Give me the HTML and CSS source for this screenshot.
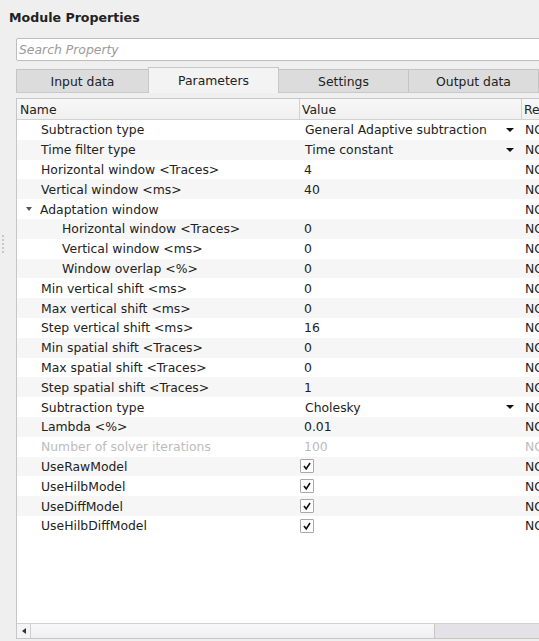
FILE: index.html
```html
<!DOCTYPE html>
<html lang="en">
<head>
  <meta charset="UTF-8">
  <title>Module Properties</title>
  <link rel="stylesheet" href="styles.css">
</head>
<body>
  <div class="grip">
    <i></i><i></i><i></i><i></i><i></i>
  </div>
  <main class="panel">
    <h1 class="title">Module Properties</h1>
    <div class="search"><span class="placeholder">Search Property</span></div>

    <div class="tabs">
      <div class="tab">Input data</div>
      <div class="tab active">Parameters</div>
      <div class="tab">Settings</div>
      <div class="tab">Output data</div>
    </div>

    <div class="tree">
      <div class="hdr">
        <div class="h-cell">Name</div>
        <div class="h-cell">Value</div>
        <div class="h-cell">Re</div>
      </div>

      <div class="rows">
        <div class="row"><div class="c-name">Subtraction type</div><div class="c-val combo">General Adaptive subtraction<span class="drop"></span></div><div class="c-re">NO</div></div>
        <div class="row"><div class="c-name">Time filter type</div><div class="c-val combo">Time constant<span class="drop"></span></div><div class="c-re">NO</div></div>
        <div class="row"><div class="c-name">Horizontal window &lt;Traces&gt;</div><div class="c-val">4</div><div class="c-re">NO</div></div>
        <div class="row"><div class="c-name">Vertical window &lt;ms&gt;</div><div class="c-val">40</div><div class="c-re">NO</div></div>
        <div class="row"><div class="c-name group"><span class="expander"></span>Adaptation window</div><div class="c-val"></div><div class="c-re">NO</div></div>
        <div class="row"><div class="c-name child">Horizontal window &lt;Traces&gt;</div><div class="c-val">0</div><div class="c-re">NO</div></div>
        <div class="row"><div class="c-name child">Vertical window &lt;ms&gt;</div><div class="c-val">0</div><div class="c-re">NO</div></div>
        <div class="row"><div class="c-name child">Window overlap &lt;%&gt;</div><div class="c-val">0</div><div class="c-re">NO</div></div>
        <div class="row"><div class="c-name">Min vertical shift &lt;ms&gt;</div><div class="c-val">0</div><div class="c-re">NO</div></div>
        <div class="row"><div class="c-name">Max vertical shift &lt;ms&gt;</div><div class="c-val">0</div><div class="c-re">NO</div></div>
        <div class="row"><div class="c-name">Step vertical shift &lt;ms&gt;</div><div class="c-val">16</div><div class="c-re">NO</div></div>
        <div class="row"><div class="c-name">Min spatial shift &lt;Traces&gt;</div><div class="c-val">0</div><div class="c-re">NO</div></div>
        <div class="row"><div class="c-name">Max spatial shift &lt;Traces&gt;</div><div class="c-val">0</div><div class="c-re">NO</div></div>
        <div class="row"><div class="c-name">Step spatial shift &lt;Traces&gt;</div><div class="c-val">1</div><div class="c-re">NO</div></div>
        <div class="row"><div class="c-name">Subtraction type</div><div class="c-val combo">Cholesky<span class="drop"></span></div><div class="c-re">NO</div></div>
        <div class="row"><div class="c-name">Lambda &lt;%&gt;</div><div class="c-val">0.01</div><div class="c-re">NO</div></div>
        <div class="row disabled"><div class="c-name">Number of solver iterations</div><div class="c-val">100</div><div class="c-re">NO</div></div>
        <div class="row"><div class="c-name">UseRawModel</div><div class="c-val"><span class="check"><svg viewBox="0 0 13 13"><path d="M3.2 6.6 L5.6 9.6 L9.8 3.2"/></svg></span></div><div class="c-re">NO</div></div>
        <div class="row"><div class="c-name">UseHilbModel</div><div class="c-val"><span class="check"><svg viewBox="0 0 13 13"><path d="M3.2 6.6 L5.6 9.6 L9.8 3.2"/></svg></span></div><div class="c-re">NO</div></div>
        <div class="row"><div class="c-name">UseDiffModel</div><div class="c-val"><span class="check"><svg viewBox="0 0 13 13"><path d="M3.2 6.6 L5.6 9.6 L9.8 3.2"/></svg></span></div><div class="c-re">NO</div></div>
        <div class="row"><div class="c-name">UseHilbDiffModel</div><div class="c-val"><span class="check"><svg viewBox="0 0 13 13"><path d="M3.2 6.6 L5.6 9.6 L9.8 3.2"/></svg></span></div><div class="c-re">NO</div></div>
      </div>

      <div class="hscroll">
        <div class="arrow-left"><span></span></div>
        <div class="slider"></div>
        <div class="track"></div>
      </div>
    </div>
  </main>
</body>
</html>
```

FILE: styles.css
```css
:root{
  --bg:#efefef;
  --line:#c6c6c6;
  --fg:#222;
  --muted:#bcbcbc;
  --alt:#f6f6f6;
}
*{box-sizing:border-box;margin:0;padding:0;}
html,body{height:100%;}
body{
  font-family:"DejaVu Sans",Verdana,sans-serif;
  font-size:12.4px;
  color:var(--fg);
  background:var(--bg);
  display:flex;
  overflow:hidden;
}

/* splitter grip on the left edge */
.grip{flex:0 0 6px;display:flex;flex-direction:column;align-items:center;gap:2px;padding-top:235px;}
.grip i{display:block;width:2px;height:2px;background:#c8c8c8;}

.panel{flex:0 0 580px;display:flex;flex-direction:column;}
.title{font-size:12.6px;font-weight:bold;line-height:15px;padding:10px 0 0 3px;height:25px;}

.search{margin:13px 0 0 10px;height:23px;background:#fff;border:1px solid #bdbdbd;border-radius:2px;display:flex;align-items:center;padding-left:2px;}
.placeholder{font-style:italic;color:#9a9a9a;}

/* ------- TABS ------- */
.tabs{display:flex;align-items:flex-end;margin:6px 0 0 10px;height:26px;}
.tab{flex:0 0 131px;height:24px;display:flex;align-items:center;justify-content:center;padding-top:1px;background:#dcdcdc;border:1px solid #c4c4c4;border-bottom-color:#c9c9c9;margin-right:-1px;}
.tab:first-child{flex-basis:133px;}
.tab.active{height:26px;padding-top:0;background:#f3f3f3;border-color:#c8c8c8;border-bottom:none;position:relative;z-index:1;}

/* ------- PROPERTY TREE ------- */
.tree{margin:5px 0 0 10px;height:541px;border:1px solid var(--line);border-right:none;background:#fff;display:flex;flex-direction:column;}
.hdr,.row{display:grid;grid-template-columns:283px 222px 80px;}
.hdr{height:21px;background:linear-gradient(#f8f8f8,#f0f0f0);border-bottom:1px solid #d2d2d2;}
.h-cell{display:flex;align-items:center;padding-left:3px;border-right:1px solid #d2d2d2;}
.h-cell:nth-child(2),.h-cell:nth-child(3){padding-left:2px;}

.rows{flex:1;}
.row{height:19.8px;align-items:center;}
.row:nth-child(even){background:var(--alt);}
.c-name{padding-left:24px;white-space:nowrap;display:flex;align-items:center;}
.c-name.child{padding-left:45px;}
.c-name.group{padding-left:9px;}
.expander{width:0;height:0;border-left:3.5px solid transparent;border-right:3.5px solid transparent;border-top:4px solid #555;margin-right:8px;}
.c-val{padding-left:4px;display:flex;align-items:center;white-space:nowrap;}
.c-val.combo{padding-left:5px;padding-right:8px;}
.drop{margin-left:auto;width:0;height:0;border-left:4px solid transparent;border-right:4px solid transparent;border-top:4px solid #111;}
.c-re{padding-left:3px;white-space:nowrap;}
.row.disabled{color:var(--muted);}

.check{display:block;width:14px;height:14px;margin-left:-4px;border:1px solid #a9a9a9;border-radius:1px;background:#fff;}
.check svg{display:block;width:12px;height:12px;}
.check path{fill:none;stroke:#111;stroke-width:1.7;}

/* ------- SCROLLBAR ------- */
.hscroll{height:15px;display:flex;border-top:1px solid #d0d0d0;background:#e4e2e6;}
.arrow-left{flex:0 0 14px;display:flex;align-items:center;justify-content:center;background:#f4f4f6;border-right:1px solid #cfcfcf;}
.arrow-left span{width:0;height:0;border-top:3.5px solid transparent;border-bottom:3.5px solid transparent;border-right:4px solid #333;}
.slider{flex:0 0 404px;background:linear-gradient(#f8f8fa,#efeff2);border-right:1px solid #c6c6c6;}
.track{flex:1;}
```
